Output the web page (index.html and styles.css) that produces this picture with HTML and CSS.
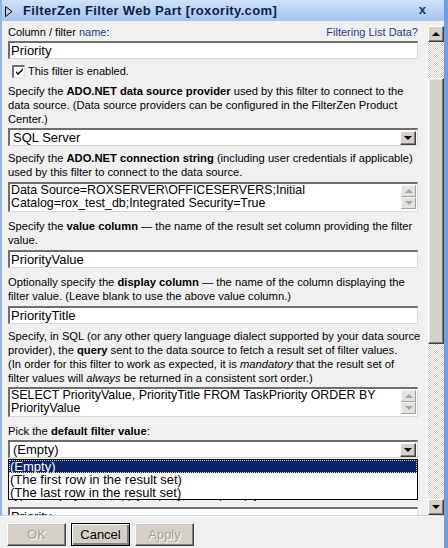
FILE: index.html
```html
<!DOCTYPE html>
<html>
<head>
<meta charset="utf-8">
<link rel="stylesheet" href="styles.css">
</head>
<body>
<div class="window">
  <div class="titlebar">
    <svg class="tri" width="8" height="11" viewBox="0 0 8 11"><path d="M0.5 0.5 L7 5.5 L0.5 10.5 Z" fill="none" stroke="#000" stroke-width="1"/></svg>
    <span class="title">FilterZen Filter Web Part [roxority.com]</span>
    <span class="close">x</span>
  </div>
  <div class="main">
    <div class="content">
      <div class="labelrow">
        <span>Column / filter <a class="lnk">name</a>:</span>
        <a class="lnk">Filtering List Data?</a>
      </div>
      <div class="input f-first">Priority</div>
      <div class="checkrow">
        <span class="checkbox"><svg width="9" height="9" viewBox="0 0 9 9"><path d="M1 4 L3 6 L8 1 L8 3 L3 8 L1 6 Z" fill="#000"/></svg></span>
        <span>This filter is enabled.</span>
      </div>
      <p class="para p1">Specify the <b>ADO.NET data source provider</b> used by this filter to connect to the<br>data source. (Data source providers can be configured in the FilterZen Product<br>Center.)</p>
      <div class="select s1"><span class="sel-text">SQL Server</span><span class="ddbtn"><i class="arrow"></i></span></div>
      <p class="para p2">Specify the <b>ADO.NET connection string</b> (including user credentials if applicable)<br>used by this filter to connect to the data source.</p>
      <div class="textarea t1">
        <div class="ta-text">Data Source=ROXSERVER\OFFICESERVERS;Initial<br>Catalog=rox_test_db;Integrated Security=True</div>
        <div class="ta-scroll"><span class="tbtn"><i class="garrow up"></i></span><span class="tbtn"><i class="garrow"></i></span></div>
      </div>
      <p class="para p3">Specify the <b>value column</b> — the name of the result set column providing the filter<br>value.</p>
      <div class="input i2">PriorityValue</div>
      <p class="para p4">Optionally specify the <b>display column</b> — the name of the column displaying the<br>filter value. (Leave blank to use the above value column.)</p>
      <div class="input i3">PriorityTitle</div>
      <p class="para p5">Specify, in SQL (or any other query language dialect supported by your data source<br>provider), the <b>query</b> sent to the data source to fetch a result set of filter values.<br>(In order for this filter to work as expected, it is <i>mandatory</i> that the result set of<br>filter values will <i>always</i> be returned in a consistent sort order.)</p>
      <div class="textarea t2">
        <div class="ta-text">SELECT PriorityValue, PriorityTitle FROM TaskPriority ORDER BY<br>PriorityValue</div>
        <div class="ta-scroll"><span class="tbtn"><i class="garrow up"></i></span><span class="tbtn"><i class="garrow"></i></span></div>
      </div>
      <p class="para p6">Pick the <b>default filter value</b>:</p>
      <div class="selwrap">
        <div class="select s2"><span class="sel-text">(Empty)</span><span class="ddbtn"><i class="arrow"></i></span></div>
        <div class="droplist">
          <div class="opt selected">(Empty)</div>
          <div class="opt">(The first row in the result set)</div>
          <div class="opt">(The last row in the result set)</div>
        </div>
      </div>
      <p class="para p7">Optionally specify the filter value to use when no value is<br>present in the result set of the query for this filter web part.<br>Type a display value, apply a query, or keep empty.</p>
      <div class="input i4">Priority</div>
    </div>
    <div class="vscroll">
      <span class="sbtn"><i class="arrow uparrow"></i></span>
      <div class="track">
        <div class="gap1"></div>
        <div class="thumb"></div>
      </div>
      <span class="sbtn"><i class="arrow"></i></span>
    </div>
  </div>
  <div class="footer">
    <button class="btn disabled">OK</button>
    <button class="btn default">Cancel</button>
    <button class="btn disabled">Apply</button>
  </div>
</div>
</body>
</html>
```

FILE: styles.css
```css
html, body {
  margin: 0;
  padding: 0;
  background: #f0f0f0;
}
body {
  font-family: "Liberation Sans", Arial, sans-serif;
  font-size: 11.2px;
  line-height: 14px;
  color: #000;
}
.window {
  width: 448px;
  height: 548px;
  display: flex;
  flex-direction: column;
  border-right: 4px solid #6f9fe2;
  box-sizing: border-box;
  overflow: hidden;
}
.titlebar {
  height: 21px;
  flex: none;
  display: flex;
  align-items: center;
  background: linear-gradient(#cfe2f9, #a3c4ee);
  border-left: 2px solid #8fb5ea;
  box-sizing: border-box;
  padding: 0 18px 0 3px;
}
.tri { flex: none; margin-right: 10px; margin-top: 1px; }
.title {
  font-weight: bold;
  font-size: 13px;
  color: #0d1f47;
  flex: 1;
  letter-spacing: 0.35px;
  white-space: nowrap;
}
.close {
  font-weight: bold;
  font-size: 13px;
  color: #17357a;
  margin-top: -2px;
}
.main {
  height: 495px;
  flex: none;
  display: flex;
  border-left: 2px solid #8fb5ea;
  border-bottom: 1px solid #d6d6d6;
  box-sizing: border-box;
}
.content {
  width: 426px;
  flex: none;
  padding: 4px 10px 0 6px;
  box-sizing: border-box;
  overflow: hidden;
}
.lnk { color: #1c3f94; text-decoration: none; }
.labelrow {
  display: flex;
  justify-content: space-between;
  font-size: 11px;
}
.para { margin: 0; white-space: nowrap; }
.input, .select, .textarea {
  background: #fff;
  border-top: 2px solid #6e6e6e;
  border-left: 2px solid #6e6e6e;
  border-right: 1px solid #d8d8d8;
  border-bottom: 1px solid #d8d8d8;
  box-sizing: border-box;
  font-size: 13px;
}
.input {
  height: 18px;
  line-height: 15px;
  padding-left: 1px;
}
.f-first { margin-top: 2px; margin-bottom: 4px; }
.checkrow {
  display: flex;
  align-items: center;
  height: 16px;
  padding-left: 4px;
  gap: 3px;
  font-size: 11px;
}
.checkbox {
  width: 13px;
  height: 13px;
  box-sizing: border-box;
  background: #fff;
  border-top: 2px solid #6e6e6e;
  border-left: 2px solid #6e6e6e;
  border-right: 1px solid #e0e0e0;
  border-bottom: 1px solid #e0e0e0;
  display: flex;
  align-items: center;
  justify-content: center;
}
.p1 { margin-top: 5px; }
.select {
  height: 18px;
  display: flex;
  align-items: center;
  justify-content: space-between;
  padding-left: 3px;
  padding-right: 1px;
}
.s1 { margin-top: 2px; }
.sel-text { line-height: 15px; }
.ddbtn, .sbtn, .tbtn {
  background: #d4d0c8;
  border: 1px solid;
  border-color: #fff #404040 #404040 #fff;
  box-shadow: inset -1px -1px #808080;
  box-sizing: border-box;
  display: flex;
  align-items: center;
  justify-content: center;
}
.ddbtn {
  width: 16px;
  height: 14px;
}
.arrow {
  width: 0;
  height: 0;
  border-left: 4px solid transparent;
  border-right: 4px solid transparent;
  border-top: 4px solid #000;
}
.uparrow {
  border-top: 0;
  border-bottom: 4px solid #000;
}
.p2 { margin-top: 5px; }
.textarea {
  height: 30px;
  display: flex;
  justify-content: space-between;
  padding-right: 1px;
  font-size: 12.4px;
}
.t1 { margin-top: 3px; }
.ta-text {
  line-height: 13px;
  padding-left: 1px;
  white-space: nowrap;
}
.ta-scroll {
  display: flex;
  flex-direction: column;
  padding-top: 1px;
}
.tbtn {
  width: 15px;
  height: 12px;
  border-color: #f4f4f4 #a0a0a0 #a0a0a0 #f4f4f4;
  box-shadow: none;
  background: #e4e2dc;
}
.garrow {
  width: 0;
  height: 0;
  border-left: 4px solid transparent;
  border-right: 4px solid transparent;
  border-top: 4px solid #a6a6a6;
}
.garrow.up {
  border-top: 0;
  border-bottom: 4px solid #a6a6a6;
}
.p3 { margin-top: 7px; }
.i2 { margin-top: 3px; }
.p4 { margin-top: 7px; }
.i3 { margin-top: 3px; }
.p5 { margin-top: 5px; }
.t2 { margin-top: 2px; }
.p6 { margin-top: 7px; }
.selwrap { position: relative; margin-top: 2px; }
.droplist {
  position: absolute;
  top: 19px;
  left: 0;
  right: 0;
  z-index: 2;
  background: #fff;
  border: 1px solid #000;
  font-size: 13px;
  line-height: 13px;
}
.opt {
  height: 13px;
  padding-left: 1px;
  white-space: nowrap;
}
.opt.selected {
  background: #0a246a;
  color: #fff;
  outline: 1px dotted #e8d38a;
  outline-offset: -1px;
}
.p7 { margin-top: 2px; }
.i4 { margin-top: 5px; }
.vscroll {
  width: 16px;
  flex: none;
  margin-top: 5px;
  height: 489px;
  display: flex;
  flex-direction: column;
}
.sbtn {
  width: 16px;
  height: 16px;
  flex: none;
}
.track {
  flex: 1;
  background-color: #fff;
  background-image: repeating-conic-gradient(#d4d0c8 0 25%, #fff 0 50%);
  background-size: 2px 2px;
  display: flex;
  flex-direction: column;
}
.gap1 { height: 36px; flex: none; }
.thumb {
  height: 266px;
  flex: none;
  background: #d4d0c8;
  border: 1px solid;
  border-color: #fff #404040 #404040 #fff;
  box-shadow: inset -1px -1px #808080, inset 1px 1px #e8e6e1;
  box-sizing: border-box;
}
.footer {
  flex: 1;
  display: flex;
  align-items: flex-start;
  gap: 4px;
  padding: 6px 0 0 7px;
  border-top: 1px solid #fbfbfb;
}
.btn {
  width: 59px;
  height: 23px;
  font-family: "Liberation Sans", Arial, sans-serif;
  font-size: 13px;
  background: #d4d0c8;
  border: 1px solid;
  border-color: #fff #404040 #404040 #fff;
  box-shadow: inset -1px -1px #808080;
  padding: 0;
  margin: 0;
  color: #000;
}
.btn.disabled {
  color: #a4a09a;
  text-shadow: 1px 1px #fff;
}
.btn.default {
  border: 1px solid #000;
  box-shadow: inset 1px 1px #fff, inset -2px -2px #808080, inset -1px -1px #404040;
  margin-left: 1px;
  margin-right: 1px;
}
```
